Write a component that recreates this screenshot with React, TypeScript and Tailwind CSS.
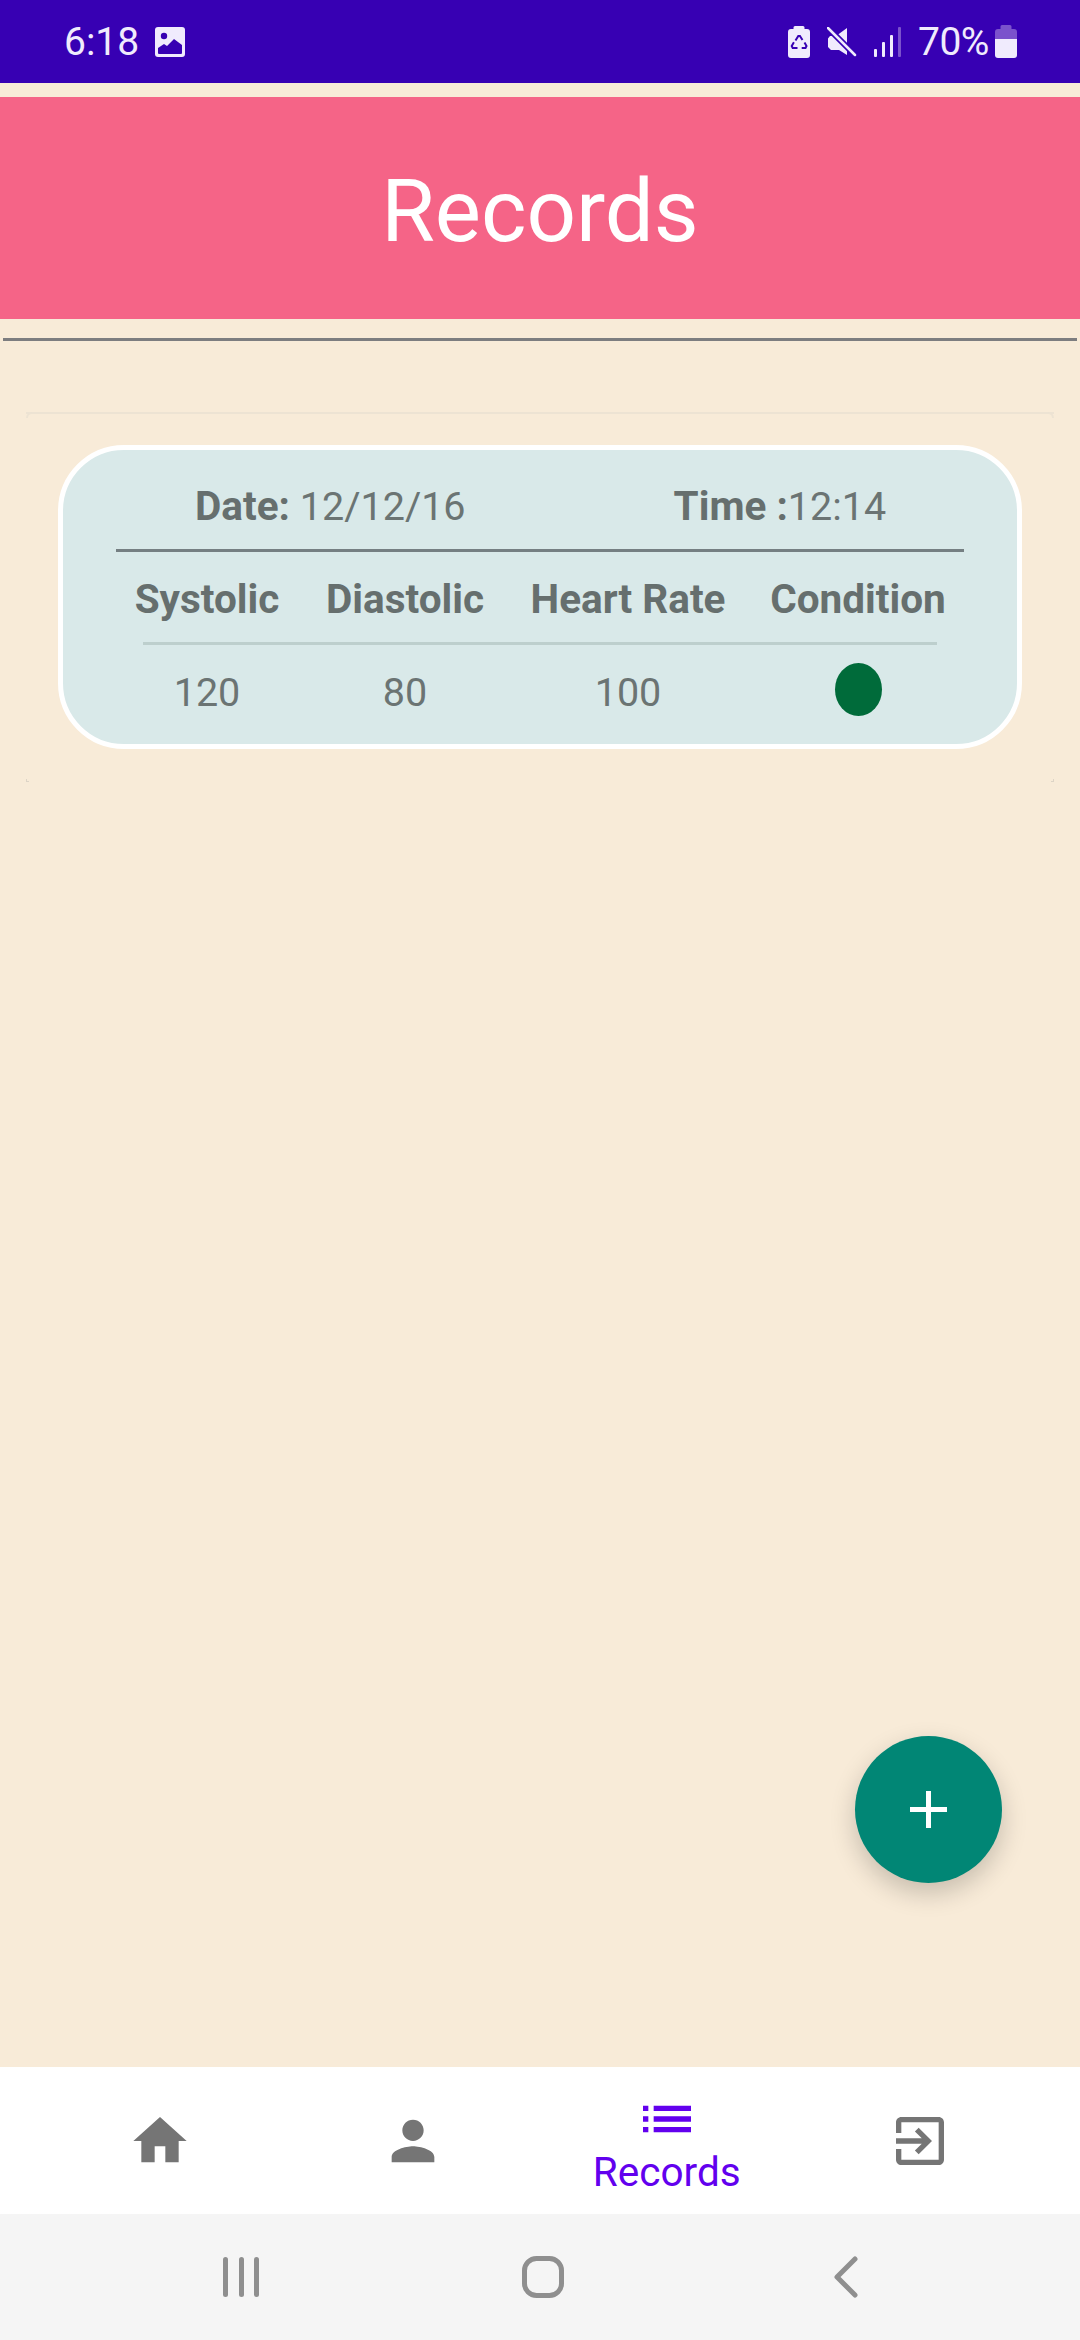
import React from "react";

const StatusIcons = () => (
  <div className="flex items-center">
    <svg width="22" height="32" viewBox="0 0 22 32">
      <path d="M7 0h8a1.500 1.500 0 0 1 1.500 1.500V3H19a3 3 0 0 1 3 3v23a3 3 0 0 1-3 3H3a3 3 0 0 1-3-3V6a3 3 0 0 1 3-3h2.500V1.500A1.500 1.500 0 0 1 7 0z" fill="#F0EBFD" />
      <g fill="none" stroke="#3700B3" strokeWidth="2">
        <path d="M7.500 14.500l2.800-4.500h1.600l2.600 4" />
        <path d="M16.500 16.500l2 3.500-1 2h-3.800" />
        <path d="M9.500 22H4.700l-1-2 2.200-3.800" />
      </g>
    </svg>
    <svg width="30" height="30" viewBox="0 0 30 30" className="ml-[17px]">
      <path d="M1 11.500 3 9h6l11-8v27l-8-5H4l-3-3z" fill="#F0EBFD" />
      <path d="M0 0 29 29" stroke="#3700B3" strokeWidth="6" />
      <path d="M1 1 28 28" stroke="#F0EBFD" strokeWidth="2.500" strokeLinecap="round" />
    </svg>
    <svg width="28" height="30" viewBox="0 0 28 30" className="ml-[17px]">
      <rect x="0" y="22" width="3" height="8" rx="1" fill="#F0EBFD" />
      <rect x="8" y="15" width="3" height="15" rx="1" fill="#F0EBFD" />
      <rect x="16" y="8" width="3" height="22" rx="1" fill="#F0EBFD" />
      <rect x="24" y="0" width="3" height="30" rx="1" fill="#7B52CC" />
    </svg>
    <span className="ml-[16px] w-[72px] text-[39px] leading-[44px] tracking-[-0.5px] text-[#F0EBFD]">70%</span>
    <svg width="22" height="33" viewBox="0 0 22 33" className="ml-[5px]">
      <path d="M7 0h8a1.500 1.500 0 0 1 1.500 1.500V4H19a3 3 0 0 1 3 3v7H0V7a3 3 0 0 1 3-3h2.500V1.500A1.500 1.500 0 0 1 7 0z" fill="#7B52CC" />
      <path d="M0 14h22v16a3 3 0 0 1-3 3H3a3 3 0 0 1-3-3z" fill="#F0EBFD" />
    </svg>
  </div>
);

const NavIcon = ({ d, color }: { d: string; color: string }) => (
  <svg width="64" height="64" viewBox="0 0 24 24" fill={color}>
    <path d={d} />
  </svg>
);

const Cols = ({ children, className }: { children: React.ReactNode; className?: string }) => (
  <div className={`grid grid-cols-[182px_214px_232px_228px] items-center text-center ${className ?? ""}`}>{children}</div>
);

export default function App() {
  return (
    <div className="relative flex h-[2340px] w-[1080px] flex-col overflow-hidden bg-[#F8EBD8] font-['Roboto',sans-serif]">
      <div className="flex h-[83px] shrink-0 items-center justify-between bg-[#3700B3] pl-[64px] pr-[63px]">
        <div className="flex items-center">
          <span className="w-[74px] text-[39px] leading-[44px] text-[#F0EBFD]">6:18</span>
          <svg width="30" height="30" viewBox="0 0 30 30" className="ml-[17px]">
            <rect width="30" height="30" rx="3" fill="#F0EBFD" />
            <circle cx="9" cy="9" r="3.200" fill="#3700B3" />
            <path d="M3 26v-5l6-4 3 2 7-7 8 6v8a1 1 0 0 1-1 1H4a1 1 0 0 1-1-1z" fill="#3700B3" />
          </svg>
        </div>
        <StatusIcons />
      </div>

      <div className="mt-[14px] flex h-[222px] shrink-0 items-center justify-center bg-[#F56487] pt-[6px]">
        <span className="text-[87px] leading-[98px] text-white">Records</span>
      </div>

      <div className="mx-[3px] mt-[19px] h-[3px] shrink-0 bg-[#7D7D7F]" />

      <div className="relative mx-[26px] mt-[71px] h-[370px] shrink-0 border-t-2 border-[#EDE3D3] px-[32px] pt-[31px]">
        <span className="absolute -top-[2px] left-0 h-[6px] w-[6px] rounded-tl-[6px] border-l-2 border-t-2 border-[#EDE3D3] bg-[#F8EBD8]" />
        <span className="absolute -top-[2px] right-0 h-[6px] w-[6px] rounded-tr-[6px] border-r-2 border-t-2 border-[#EDE3D3] bg-[#F8EBD8]" />
        <span className="absolute bottom-0 left-0 h-[3px] w-[3px] border-b border-l border-[#DDD4C6]" />
        <span className="absolute bottom-0 right-0 h-[3px] w-[3px] border-b border-r border-[#DDD4C6]" />
        <div className="h-[304px] rounded-[66px] border-[5px] border-white bg-[#D9E9E9] pt-[34px] text-[39.5px] leading-[45px] text-[#6B7473]">
          <div className="flex gap-[208px] pl-[132px]">
            <span><b className="text-[40.5px] font-bold text-[#666F6E]">Date:</b> 12/12/16</span>
            <span><b className="text-[40.5px] font-bold text-[#666F6E]">Time :</b>12:14</span>
          </div>
          <div className="mx-[53px] mt-[20px] h-[3px] bg-[#757F82]" />
          <Cols className="mx-[53px] mt-[25px] text-[40.5px] font-bold text-[#666F6E]">
            <span>Systolic</span>
            <span>Diastolic</span>
            <span>Heart Rate</span>
            <span>Condition</span>
          </Cols>
          <div className="mx-[80px] mt-[20px] h-[3px] bg-[#BDCFCD]" />
          <Cols className="mx-[53px] mt-[18px]">
            <span className="pt-[6px]">120</span>
            <span className="pt-[6px]">80</span>
            <span className="pt-[6px]">100</span>
            <span className="flex justify-center">
              <span className="h-[53px] w-[47px] rounded-[50%] bg-[#006B3A]" />
            </span>
          </Cols>
        </div>
      </div>

      <div className="mt-auto grid h-[147px] shrink-0 grid-cols-4 bg-white px-[33px]">
        <div className="flex flex-col items-center pt-[42px]">
          <NavIcon color="#757575" d="M10 20v-6h4v6h5v-8h3L12 3 2 12h3v8z" />
        </div>
        <div className="flex flex-col items-center pt-[42px]">
          <NavIcon color="#757575" d="M12 12c2.210 0 4-1.790 4-4s-1.790-4-4-4-4 1.790-4 4 1.790 4 4 4zm0 2c-2.670 0-8 1.340-8 4v2h16v-2c0-2.660-5.330-4-8-4z" />
        </div>
        <div className="flex flex-col items-center pt-[20px]">
          <NavIcon color="#6200EE" d="M3 13h2v-2H3v2zm0 4h2v-2H3v2zm0-8h2V7H3v2zm4 4h14v-2H7v2zm0 4h14v-2H7v2zM7 7v2h14V7H7z" />
          <span className="-mt-[1px] text-[40.5px] leading-[45px] text-[#6200EE]">Records</span>
        </div>
        <div className="flex flex-col items-center pt-[42px]">
          <NavIcon color="#757575" d="M10.090 15.590L11.500 17l5-5-5-5-1.410 1.410L12.670 11H3v2h9.670l-2.580 2.590zM19 3H5c-1.110 0-2 .9-2 2v4h2V5h14v14H5v-4H3v4c0 1.100.89 2 2 2h14c1.100 0 2-.9 2-2V5c0-1.100-.9-2-2-2z" />
        </div>
      </div>

      <div className="flex h-[126px] shrink-0 items-center bg-[#F5F5F5] pl-[223px]">
        <svg width="36" height="42" viewBox="0 0 36 42" fill="#8F8F8F">
          <rect x="0" y="1" width="5" height="40" rx="2.500" />
          <rect x="16" y="1" width="5" height="40" rx="2.500" />
          <rect x="31" y="1" width="5" height="40" rx="2.500" />
        </svg>
        <svg width="42" height="42" viewBox="0 0 42 42" className="ml-[263px]" fill="none" stroke="#8F8F8F" strokeWidth="5">
          <rect x="2.500" y="2.500" width="37" height="37" rx="12" />
        </svg>
        <svg width="24" height="42" viewBox="0 0 24 42" className="ml-[270px]" fill="none" stroke="#8F8F8F" strokeWidth="5" strokeLinecap="round" strokeLinejoin="round">
          <path d="M21 3 3 21l18 18" />
        </svg>
      </div>

      <button className="absolute bottom-[457px] right-[78px] flex h-[147px] w-[147px] items-center justify-center rounded-full bg-[#018675] shadow-[0_10px_26px_rgba(0,0,0,0.2)]">
        <svg width="37" height="37" viewBox="0 0 37 37" fill="white">
          <rect x="16" y="0" width="5" height="37" />
          <rect x="0" y="16" width="37" height="5" />
        </svg>
      </button>
    </div>
  );
}
